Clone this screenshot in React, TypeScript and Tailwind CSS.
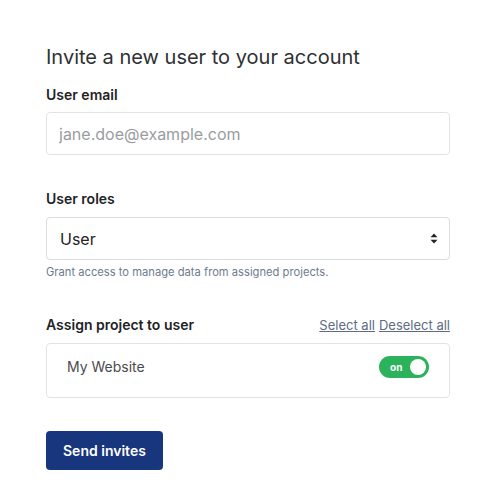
import React, { useState } from 'react'

function Toggle({ on, onChange }: { on: boolean; onChange: () => void }) {
  return (
    <button
      type="button"
      onClick={onChange}
      className={`relative flex h-[22px] w-[50px] items-center rounded-full ${on ? 'bg-[#2db25c]' : 'bg-[#cbd2dc]'}`}
    >
      <span className={`absolute left-[11px] text-[10px] font-bold text-white ${on ? '' : 'hidden'}`}>on</span>
      <span
        className={`absolute top-[3px] h-4 w-4 rounded-full bg-white ${on ? 'left-[31px]' : 'left-[3px]'}`}
      />
    </button>
  )
}

export default function App() {
  const [assigned, setAssigned] = useState(true)

  return (
    <div className="min-h-[502px] bg-white font-['Inter',sans-serif]">
      <div className="ml-[46px] w-[404px] pt-[43px]">
        <h1 className="text-[20px] leading-7 text-[#2f3033]">Invite a new user to your account</h1>

        <label className="mt-[14px] block text-sm font-semibold leading-5 text-[#222326]">User email</label>
        <input
          type="email"
          placeholder="jane.doe@example.com"
          className="mt-[7px] h-[43px] w-full rounded border border-[#e1e3e7] px-3 text-base text-[#222] placeholder:text-[#9a9ca1] outline-none"
        />

        <label className="mt-[34px] block text-sm font-semibold leading-5 text-[#222326]">User roles</label>
        <div className="mt-2 flex h-[43px] w-full items-center justify-between rounded border border-[#d9dce1] pl-[13px] pr-[11px]">
          <span className="text-base text-[#222326]">User</span>
          <svg width="8" height="11" viewBox="0 0 8 11" className="text-[#222]">
            <path d="M4 0.5 L7.5 4.3 H0.5 Z" fill="currentColor" />
            <path d="M4 10.5 L7.5 6.7 H0.5 Z" fill="currentColor" />
          </svg>
        </div>
        <p className="mt-1 text-[11.2px] leading-4 text-[#6e7b8f]">Grant access to manage data from assigned projects.</p>

        <div className="mt-[35px] flex items-center justify-between leading-5">
          <span className="text-sm font-semibold text-[#222326]">Assign project to user</span>
          <div className="flex gap-1 text-[13px] text-[#5d6b84]">
            <a href="#" className="underline">Select all</a>
            <a href="#" className="underline">Deselect all</a>
          </div>
        </div>
        <div className="mt-2 flex h-[55px] items-center justify-between rounded border border-[#e1e3e7] px-5 pb-[7px]">
          <span className="text-sm text-[#4a4b4f]">My Website</span>
          <Toggle on={assigned} onChange={() => setAssigned(!assigned)} />
        </div>

        <button
          type="button"
          className="mt-[33px] h-[39px] rounded bg-[#17367d] px-[17px] text-sm font-semibold text-white"
        >
          Send invites
        </button>
      </div>
    </div>
  )
}
